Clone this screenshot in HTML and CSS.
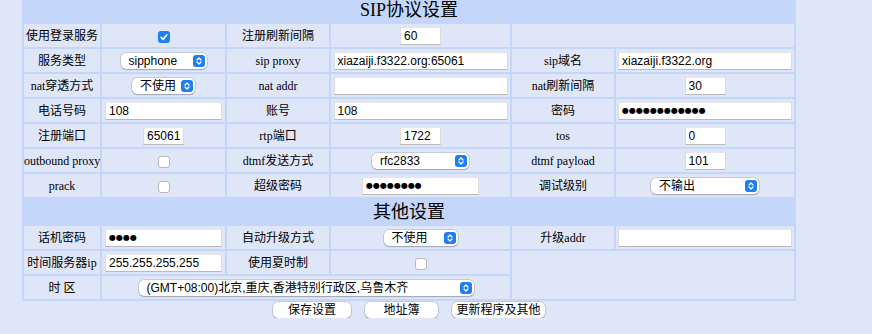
FILE: index.html
```html
<!DOCTYPE html>
<html lang="zh-CN">
<head>
<meta charset="utf-8">
<title>SIP协议设置</title>
<link rel="stylesheet" href="styles.css">
</head>
<body>
<div class="wrap">
<table class="cfg">
  <colgroup>
    <col class="c1"><col class="c2"><col class="c3"><col class="c4"><col class="c5"><col class="c6">
  </colgroup>
  <tr><td class="hd" colspan="6">SIP协议设置</td></tr>
  <tr>
    <td>使用登录服务</td>
    <td><span class="cb on"><svg viewBox="0 0 12 12" width="12" height="12"><path d="M3.2 6.3 L5.2 8.3 L8.9 3.8" fill="none" stroke="#fff" stroke-width="1.7" stroke-linecap="round" stroke-linejoin="round"/></svg></span></td>
    <td>注册刷新间隔</td>
    <td><input class="tf sm" type="text" value="60"></td>
    <td colspan="2"></td>
  </tr>
  <tr>
    <td>服务类型</td>
    <td><span class="sel w-type"><span class="st">sipphone</span><svg class="ic" viewBox="0 0 12 12" width="12" height="12"><rect width="12" height="12" rx="3" fill="#1f7ef5"/><path d="M4 5 L6 3 L8 5 M4 7 L6 9 L8 7" fill="none" stroke="#fff" stroke-width="1.3" stroke-linecap="round" stroke-linejoin="round"/></svg></span></td>
    <td>sip proxy</td>
    <td><input class="tf lg" type="text" value="xiazaiji.f3322.org:65061"></td>
    <td>sip域名</td>
    <td><input class="tf lg" type="text" value="xiazaiji.f3322.org"></td>
  </tr>
  <tr>
    <td>nat穿透方式</td>
    <td><span class="sel w-nat"><span class="st">不使用</span><svg class="ic" viewBox="0 0 12 12" width="12" height="12"><rect width="12" height="12" rx="3" fill="#1f7ef5"/><path d="M4 5 L6 3 L8 5 M4 7 L6 9 L8 7" fill="none" stroke="#fff" stroke-width="1.3" stroke-linecap="round" stroke-linejoin="round"/></svg></span></td>
    <td>nat addr</td>
    <td><input class="tf lg" type="text" value=""></td>
    <td>nat刷新间隔</td>
    <td><input class="tf sm" type="text" value="30"></td>
  </tr>
  <tr>
    <td>电话号码</td>
    <td><input class="tf md" type="text" value="108"></td>
    <td>账号</td>
    <td><input class="tf lg" type="text" value="108"></td>
    <td>密码</td>
    <td><input class="tf lg pw" type="text" value="●●●●●●●●●●●●"></td>
  </tr>
  <tr>
    <td>注册端口</td>
    <td><input class="tf sm" type="text" value="65061"></td>
    <td>rtp端口</td>
    <td><input class="tf sm" type="text" value="1722"></td>
    <td>tos</td>
    <td><input class="tf sm" type="text" value="0"></td>
  </tr>
  <tr>
    <td>outbound proxy</td>
    <td><span class="cb"></span></td>
    <td>dtmf发送方式</td>
    <td><span class="sel w-dtmf"><span class="st">rfc2833</span><svg class="ic" viewBox="0 0 12 12" width="12" height="12"><rect width="12" height="12" rx="3" fill="#1f7ef5"/><path d="M4 5 L6 3 L8 5 M4 7 L6 9 L8 7" fill="none" stroke="#fff" stroke-width="1.3" stroke-linecap="round" stroke-linejoin="round"/></svg></span></td>
    <td>dtmf payload</td>
    <td><input class="tf sm" type="text" value="101"></td>
  </tr>
  <tr>
    <td>prack</td>
    <td><span class="cb"></span></td>
    <td>超级密码</td>
    <td><input class="tf md pw" type="text" value="●●●●●●●●"></td>
    <td>调试级别</td>
    <td><span class="sel w-log"><span class="st">不输出</span><svg class="ic" viewBox="0 0 12 12" width="12" height="12"><rect width="12" height="12" rx="3" fill="#1f7ef5"/><path d="M4 5 L6 3 L8 5 M4 7 L6 9 L8 7" fill="none" stroke="#fff" stroke-width="1.3" stroke-linecap="round" stroke-linejoin="round"/></svg></span></td>
  </tr>
  <tr><td class="hd" colspan="6">其他设置</td></tr>
  <tr>
    <td>话机密码</td>
    <td><input class="tf md pw" type="text" value="●●●●"></td>
    <td>自动升级方式</td>
    <td><span class="sel w-up"><span class="st">不使用</span><svg class="ic" viewBox="0 0 12 12" width="12" height="12"><rect width="12" height="12" rx="3" fill="#1f7ef5"/><path d="M4 5 L6 3 L8 5 M4 7 L6 9 L8 7" fill="none" stroke="#fff" stroke-width="1.3" stroke-linecap="round" stroke-linejoin="round"/></svg></span></td>
    <td>升级addr</td>
    <td><input class="tf lg" type="text" value=""></td>
  </tr>
  <tr>
    <td>时间服务器ip</td>
    <td><input class="tf md" type="text" value="255.255.255.255"></td>
    <td>使用夏时制</td>
    <td><span class="cb"></span></td>
    <td colspan="2" rowspan="2"></td>
  </tr>
  <tr>
    <td>时 区</td>
    <td colspan="3"><span class="sel w-tz"><span class="st">(GMT+08:00)北京,重庆,香港特别行政区,乌鲁木齐</span><svg class="ic" viewBox="0 0 12 12" width="12" height="12"><rect width="12" height="12" rx="3" fill="#1f7ef5"/><path d="M4 5 L6 3 L8 5 M4 7 L6 9 L8 7" fill="none" stroke="#fff" stroke-width="1.3" stroke-linecap="round" stroke-linejoin="round"/></svg></span></td>
  </tr>
</table>
<div class="btns">
  <button class="btn b-save" type="button">保存设置</button>
  <button class="btn b-book" type="button">地址簿</button>
  <button class="btn b-upd" type="button">更新程序及其他</button>
</div>
</div>
</body>
</html>
```
FILE: styles.css
```css
html, body {
  margin: 0;
  padding: 0;
  background: #dfe6f7;
}
body {
  font-family: "Liberation Serif", "Noto Sans CJK SC", serif;
  color: #000;
}
.wrap {
  padding-left: 22px;
  width: 774px;
}
table.cfg {
  border-collapse: separate;
  border-spacing: 2px;
  background: #c4d7fb;
  table-layout: fixed;
  width: 774px;
  margin-top: -5px;
}
col.c1 { width: 76px; }
col.c2 { width: 123px; }
col.c3 { width: 102px; }
col.c4 { width: 179px; }
col.c5 { width: 102px; }
col.c6 { width: 178px; }
td {
  background: #dfe6f7;
  padding: 0;
  height: 23px;
  text-align: center;
  vertical-align: middle;
  font-size: 12px;
  line-height: 14px;
  white-space: nowrap;
}
td.hd {
  background: transparent;
  height: 25px;
  font-size: 18px;
  line-height: 22px;
}
.tf {
  box-sizing: border-box;
  height: 18px;
  margin: 0;
  padding: 0 3px;
  border: 1px solid #dcdcdc;
  border-top-color: #e6e6e6;
  border-bottom-color: #b9b9b9;
  background: #fff;
  color: #000;
  font-family: "Liberation Sans", "Noto Sans CJK SC", sans-serif;
  font-size: 12px;
  outline: none;
  vertical-align: middle;
}
.tf.sm { width: 41px; }
.tf.md { width: 117px; }
.tf.lg { width: 174px; }
.tf.pw {
  font-family: "DejaVu Sans", sans-serif;
  font-size: 8px;
  letter-spacing: 0;
}
.cb {
  display: inline-block;
  box-sizing: border-box;
  width: 12px;
  height: 12px;
  border-radius: 3px;
  background: #fff;
  border: 1px solid #b9b9b9;
  vertical-align: middle;
}
.cb svg { display: block; }
.cb.on {
  background: #1f7ef5;
  border: none;
}
.sel {
  display: inline-flex;
  align-items: center;
  justify-content: space-between;
  box-sizing: border-box;
  height: 16px;
  padding: 0 2px 0 8px;
  background: #fff;
  border-radius: 5px;
  box-shadow: 0 0 0 0.5px rgba(0, 0, 0, 0.22), 0 1px 1.5px rgba(0, 0, 0, 0.2);
  font-family: "Liberation Sans", "Noto Sans CJK SC", sans-serif;
  font-size: 12px;
  line-height: 16px;
  vertical-align: middle;
  text-align: left;
}
.sel .st { white-space: nowrap; }
.sel .ic { flex: none; display: block; }
.w-type { width: 86px; }
.w-nat { width: 63px; }
.w-dtmf { width: 97px; }
.w-log { width: 108px; }
.w-up { width: 74px; }
.w-tz { width: 335px; }
.btns {
  display: flex;
  justify-content: center;
  gap: 14px;
  width: 774px;
  margin-top: 1px;
}
.btn {
  box-sizing: border-box;
  height: 16px;
  padding: 0;
  border: none;
  border-radius: 5px;
  background: #fff;
  box-shadow: 0 0 0 0.5px rgba(0, 0, 0, 0.22), 0 1px 1.5px rgba(0, 0, 0, 0.2);
  font-family: "Liberation Sans", "Noto Sans CJK SC", sans-serif;
  font-size: 12px;
  line-height: 16px;
  color: #000;
}
.b-save { width: 78px; }
.b-book { width: 73px; }
.b-upd { width: 93px; }
```
